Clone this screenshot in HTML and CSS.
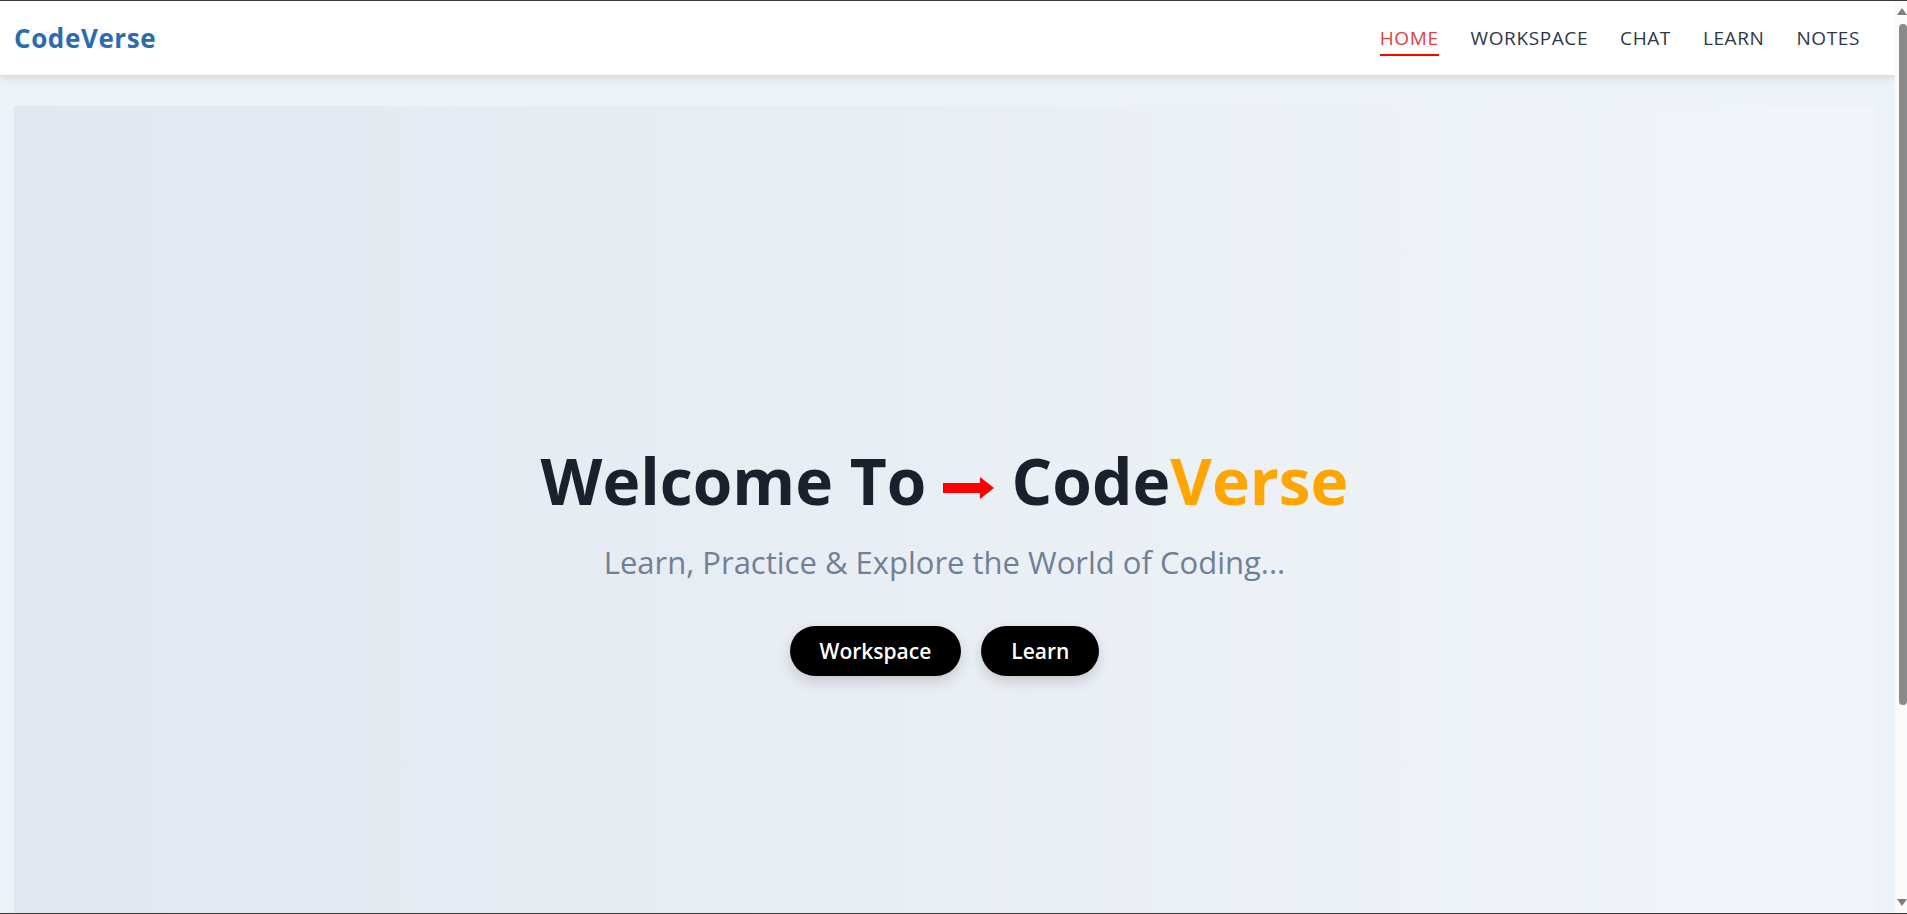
FILE: index.html
```html
<!DOCTYPE html>
<html lang="en">
<head>
<meta charset="utf-8">
<title>CodeVerse</title>
<link rel="stylesheet" href="styles.css">
</head>
<body>
<div class="window">
  <div class="page">
    <header class="topbar">
      <a class="logo" href="#">CodeVerse</a>
      <nav class="nav">
        <a class="nav-link active" href="#">HOME</a>
        <a class="nav-link" href="#">WORKSPACE</a>
        <a class="nav-link" href="#">CHAT</a>
        <a class="nav-link" href="#">LEARN</a>
        <a class="nav-link" href="#">NOTES</a>
      </nav>
    </header>
    <section class="hero">
      <h1 class="hero-title">Welcome To <svg class="arrow" viewBox="0 0 52 22" width="52" height="22" aria-label="→"><path d="M0 6h37V0l14 11-14 11v-6H0z" fill="#ff0000"/></svg> Code<span class="accent">Verse</span></h1>
      <p class="hero-sub">Learn, Practice &amp; Explore the World of Coding...</p>
      <div class="actions">
        <a class="btn" href="#">Workspace</a>
        <a class="btn" href="#">Learn</a>
      </div>
    </section>
  </div>
  <div class="scrollbar">
    <span class="sb-arrow up"></span>
    <span class="sb-thumb"></span>
    <span class="sb-space"></span>
    <span class="sb-arrow down"></span>
  </div>
</div>
</body>
</html>
```

FILE: styles.css
```css
* { box-sizing: border-box; }
html, body { margin: 0; padding: 0; height: 100%; overflow: hidden; }
body {
  font-family: "Open Sans", "DejaVu Sans", sans-serif;
  background: #edf2f7;
}
.window {
  display: flex;
  height: 914px;
  border-top: 1px solid #3a3a3a;
  border-bottom: 1px solid #3a3a3a;
}
.page {
  flex: 1;
  overflow: hidden;
  background: #edf2f7;
}
.topbar {
  height: 74px;
  background: #fff;
  display: flex;
  align-items: center;
  justify-content: space-between;
  padding: 0 35px 0 14px;
  box-shadow: 0 2px 8px rgba(0, 0, 0, 0.14);
  position: relative;
  z-index: 1;
}
.logo {
  font-weight: 700;
  font-size: 26px;
  color: #2b6cb0;
  text-decoration: none;
  letter-spacing: 0.6px;
}
.nav { display: flex; gap: 32px; align-items: center; }
.nav-link {
  font-size: 19px;
  color: #2d3748;
  text-decoration: none;
  padding-bottom: 3px;
  border-bottom: 2px solid transparent;
  margin-top: 6px;
  letter-spacing: 0.6px;
  line-height: 1.3;
}
.nav-link.active { color: #e53e3e; border-bottom-color: #ff0000; }
.hero {
  margin: 31px 20px 0 14px;
  min-height: 914px;
  padding-bottom: 7px;
  background: linear-gradient(to right, #e2e8f0, #f1f5f9);
  display: flex;
  flex-direction: column;
  align-items: center;
  justify-content: center;
  text-align: center;
}
.hero-title {
  margin: 0;
  font-size: 64px;
  font-weight: 700;
  color: #1a202c;
  line-height: 1.2;
}
.accent { color: #ffa500; }
.arrow { vertical-align: 0.1em; }
.hero-sub {
  margin: 21px 0 0;
  font-size: 31px;
  line-height: 1.4;
  color: #718096;
  font-weight: 400;
}
.actions { display: flex; gap: 20px; margin-top: 42px; }
.btn {
  display: inline-flex;
  align-items: center;
  height: 50px;
  padding: 0 30px;
  border-radius: 25px;
  background: #000;
  color: #fff;
  font-weight: 600;
  font-size: 21px;
  text-decoration: none;
  box-shadow: 0 6px 14px rgba(0, 0, 0, 0.15);
}
.scrollbar {
  width: 12px;
  background: #fafafa;
  display: flex;
  flex-direction: column;
  align-items: flex-end;
  padding: 7px 0 7px 3px;
}
.sb-arrow {
  width: 0; height: 0;
  border-left: 5px solid transparent;
  border-right: 5px solid transparent;
}
.sb-arrow.up { border-bottom: 7px solid #7e7e7e; }
.sb-arrow.down { border-top: 7px solid #7e7e7e; }
.sb-thumb {
  width: 8px;
  height: 681px;
  margin-top: 9px;
  background: #8a8a8a;
  border-radius: 4px;
}
.sb-space { flex: 1; }
```
